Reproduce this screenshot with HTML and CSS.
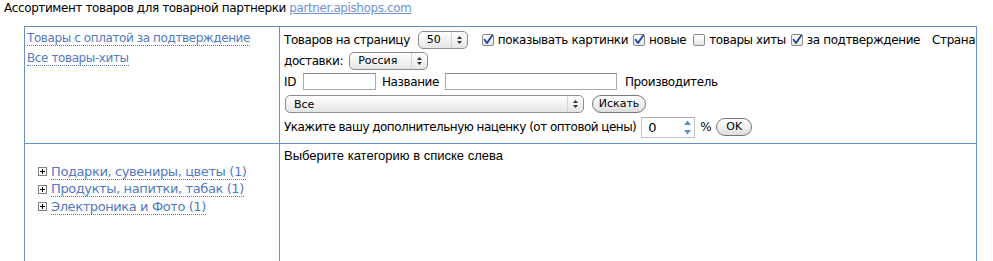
FILE: index.html
```html
<!DOCTYPE html>
<html lang="ru">
<head>
<meta charset="utf-8">
<title>Ассортимент товаров</title>
<link rel="stylesheet" href="styles.css">
</head>
<body>
<p class="title">Ассортимент товаров для товарной партнерки <a class="site-link" href="#">partner.apishops.com</a></p>
<div class="board">
  <div class="cell cell-nav">
    <a class="dlink" href="#">Товары с оплатой за подтверждение</a>
    <a class="dlink" href="#">Все товары-хиты</a>
  </div>
  <div class="cell cell-filter">
    <div class="frow frow-1">
      <span>Товаров на страницу</span>
      <span class="sel sel-per"><span class="sel-text">50</span><span class="sel-arrow"><svg width="7" height="10" viewBox="0 0 7 10"><path d="M3.5 1 L6 4 H1 Z M3.5 9 L6 6 H1 Z" fill="#333"/></svg></span></span>
      <span class="cb"><svg width="12" height="12" viewBox="0 0 12 12"><path d="M2.6 5.8 L5 9 L10.2 1.4" fill="none" stroke="#1d3fa0" stroke-width="1.8" stroke-linecap="round" stroke-linejoin="round"/></svg></span>
      <span>показывать картинки</span>
      <span class="cb"><svg width="12" height="12" viewBox="0 0 12 12"><path d="M2.6 5.8 L5 9 L10.2 1.4" fill="none" stroke="#1d3fa0" stroke-width="1.8" stroke-linecap="round" stroke-linejoin="round"/></svg></span>
      <span>новые</span>
      <span class="cb cb-empty"></span>
      <span>товары хиты</span>
      <span class="cb"><svg width="12" height="12" viewBox="0 0 12 12"><path d="M2.6 5.8 L5 9 L10.2 1.4" fill="none" stroke="#1d3fa0" stroke-width="1.8" stroke-linecap="round" stroke-linejoin="round"/></svg></span>
      <span>за подтверждение</span>
      <span class="country">Страна</span>
    </div>
    <div class="frow">
      <span>доставки:</span>
      <span class="sel sel-country"><span class="sel-text">Россия</span><span class="sel-arrow"><svg width="7" height="10" viewBox="0 0 7 10"><path d="M3.5 1 L6 4 H1 Z M3.5 9 L6 6 H1 Z" fill="#333"/></svg></span></span>
    </div>
    <div class="frow">
      <span>ID</span>
      <input class="txt txt-id" type="text">
      <span class="lbl">Название</span>
      <input class="txt txt-name" type="text">
      <span class="lbl lbl-maker">Производитель</span>
    </div>
    <div class="frow frow-4">
      <span class="sel sel-maker"><span class="sel-text">Все</span><span class="sel-arrow"><svg width="7" height="10" viewBox="0 0 7 10"><path d="M3.5 1 L6 4 H1 Z M3.5 9 L6 6 H1 Z" fill="#333"/></svg></span></span>
      <button class="btn btn-search" type="button">Искать</button>
    </div>
    <div class="frow frow-5">
      <span class="lead">Укажите вашу дополнительную наценку (от оптовой цены)</span>
      <span class="num"><span class="num-val">0</span><span class="num-spin"><svg width="9" height="17" viewBox="0 0 9 17"><path d="M4.5 1.5 L8 6 H1 Z" fill="#5a8fd8"/><path d="M4.5 15.5 L8 11 H1 Z" fill="#5a8fd8"/></svg></span></span>
      <span class="pct">%</span>
      <button class="btn btn-ok" type="button">OK</button>
    </div>
  </div>
  <div class="cell cell-tree">
    <div class="titem"><span class="plus"><svg width="9" height="9" viewBox="0 0 9 9"><rect x="0.5" y="0.5" width="8" height="8" fill="#fff" stroke="#808080"/><path d="M2 4.5 H7 M4.5 2 V7" stroke="#000" stroke-width="1"/></svg></span><a class="dlink tlink" href="#">Подарки, сувениры, цветы (1)</a></div>
    <div class="titem"><span class="plus"><svg width="9" height="9" viewBox="0 0 9 9"><rect x="0.5" y="0.5" width="8" height="8" fill="#fff" stroke="#808080"/><path d="M2 4.5 H7 M4.5 2 V7" stroke="#000" stroke-width="1"/></svg></span><a class="dlink tlink" href="#">Продукты, напитки, табак (1)</a></div>
    <div class="titem"><span class="plus"><svg width="9" height="9" viewBox="0 0 9 9"><rect x="0.5" y="0.5" width="8" height="8" fill="#fff" stroke="#808080"/><path d="M2 4.5 H7 M4.5 2 V7" stroke="#000" stroke-width="1"/></svg></span><a class="dlink tlink" href="#">Электроника и Фото (1)</a></div>
  </div>
  <div class="cell cell-result">
    <span class="hint">Выберите категорию в списке слева</span>
  </div>
</div>
</body>
</html>
```
FILE: styles.css
```css
html, body {
  margin: 0;
  padding: 0;
  background: #fff;
}
body {
  font-family: "DejaVu Sans", "Liberation Sans", sans-serif;
  font-size: 12px;
  letter-spacing: -0.4px;
  color: #000;
}
.title {
  margin: 0;
  padding: 1px 0 0 4px;
  height: 26px;
  box-sizing: border-box;
  line-height: 14px;
}
.site-link {
  color: #6f93d3;
  text-decoration: underline;
}
.board {
  margin-left: 24px;
  width: 953px;
  display: grid;
  grid-template-columns: 255px minmax(0, 1fr);
  grid-template-rows: 117px 140px;
  border-left: 1px solid #6a90c9;
  border-top: 1px solid #6a90c9;
  box-sizing: border-box;
}
.cell {
  border-right: 1px solid #6a90c9;
  border-bottom: 1px solid #6a90c9;
  min-width: 0;
}
.cell-nav {
  padding: 1px 0 0 2px;
  display: flex;
  flex-direction: column;
  align-items: flex-start;
}
.dlink {
  color: #5279c1;
  text-decoration: none;
  border-bottom: 1px dotted #5279c1;
  line-height: 14px;
  margin: 3px 0 2px;
}
.cell-filter {
  padding: 2px 4px 0 4px;
}
.frow {
  display: flex;
  align-items: center;
  height: 21px;
  white-space: nowrap;
}
.frow > * { flex-shrink: 0; }
.frow-4 { height: 24px; }
.frow-5 { height: 22px; }
.lead { letter-spacing: -0.52px; }
.sel {
  display: inline-flex;
  align-items: center;
  height: 18px;
  box-sizing: border-box;
  border: 1px solid #8c8c8c;
  border-radius: 5px;
  background: linear-gradient(#ffffff, #f4f4f4 45%, #e4e4e4);
  font-size: 11px;
  letter-spacing: 0;
  overflow: hidden;
}
.sel-text {
  flex: 1;
  padding-left: 8px;
}
.sel-arrow {
  width: 15px;
  height: 100%;
  display: flex;
  align-items: center;
  justify-content: center;
  border-left: 1px solid #d4d4d4;
}
.sel-per { width: 50px; margin: 0 9px 0 8px; }
.sel-country { width: 79px; margin-left: 6px; }
.sel-maker { width: 299px; margin-left: 1px; }
.cb {
  display: inline-flex;
  width: 12px;
  height: 12px;
  box-sizing: border-box;
  border: 1px solid #8a8a8a;
  border-radius: 2px;
  background: linear-gradient(#ffffff, #e6e6e6);
  margin: 0 4px 0 5px;
  align-items: center;
  justify-content: center;
}
.cb svg { margin: -1px; }
.cb-empty { margin-left: 7px; }
.country { margin-left: 12px; }
.txt {
  box-sizing: border-box;
  height: 17px;
  border: 1px solid #a9a9a9;
  border-top-color: #8b8b8b;
  padding: 0 2px;
  margin: 0;
  font: inherit;
}
.txt-id { width: 73px; margin-left: 7px; }
.lbl { margin-left: 6px; }
.txt-name { width: 172px; margin-left: 6px; }
.lbl-maker { margin-left: 8px; }
.btn {
  box-sizing: border-box;
  height: 18px;
  border: 1px solid #777;
  border-radius: 9px;
  background: linear-gradient(#ffffff, #f2f2f2 50%, #dcdcdc);
  font-family: inherit;
  font-size: 11px;
  letter-spacing: 0;
  color: #000;
  padding: 0;
  line-height: 16px;
}
.btn-search { width: 54px; margin-left: 8px; }
.num {
  display: inline-flex;
  align-items: center;
  width: 54px;
  height: 21px;
  box-sizing: border-box;
  border: 1px solid #c6c6c6;
  border-top-color: #a8a8a8;
  margin-left: 5px;
  background: #fff;
}
.num-val {
  flex: 1;
  padding-left: 6px;
  font-size: 13px;
}
.num-spin {
  width: 14px;
  display: flex;
  justify-content: center;
}
.pct { margin-left: 5px; }
.btn-ok { width: 36px; margin-left: 5px; }
.cell-tree {
  padding: 19px 0 0 13px;
}
.titem {
  display: flex;
  align-items: center;
  height: 17.5px;
}
.plus {
  display: inline-flex;
  width: 9px;
  height: 9px;
  margin-right: 4px;
}
.tlink {
  font-size: 13px;
  margin: 0;
  line-height: 15px;
}
.cell-result {
  padding: 4px 4px 0 4px;
}
.hint {
  font-family: "Liberation Sans", Arial, sans-serif;
  font-size: 13px;
  letter-spacing: 0;
  line-height: 16px;
}
```
